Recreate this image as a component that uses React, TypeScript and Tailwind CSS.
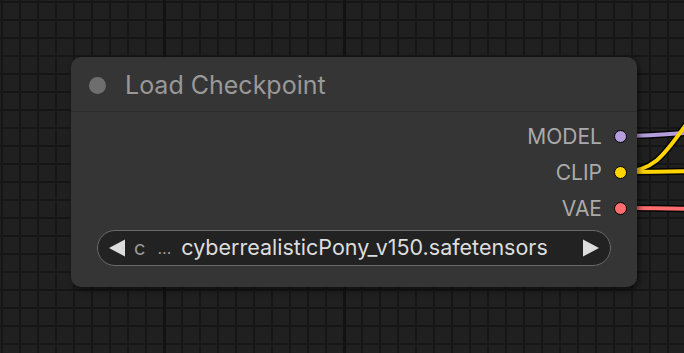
import React from 'react'

const outputs = [
  { name: 'MODEL', color: 'bg-[#b39ddb]' },
  { name: 'CLIP', color: 'bg-[#ffd500]' },
  { name: 'VAE', color: 'bg-[#ff6e6e]' },
]

const GridBackground = () => (
  <svg className="absolute inset-0" width="684" height="353">
    <defs>
      <pattern id="minor" x="1" y="1" width="18" height="18" patternUnits="userSpaceOnUse">
        <rect width="18" height="18" fill="#202020" />
        <rect width="2" height="18" fill="#161616" />
        <rect width="18" height="2" fill="#161616" />
      </pattern>
    </defs>
    <rect width="684" height="353" fill="url(#minor)" />
    <rect x="163" y="0" width="3" height="353" fill="#121212" />
    <rect x="343" y="0" width="3" height="353" fill="#121212" />
  </svg>
)

const Links = () => (
  <svg className="absolute inset-0" width="684" height="353" fill="none">
    {/* outlines */}
    <g stroke="#000" strokeWidth="7" strokeLinecap="round" opacity="0.85">
      <path d="M621 136 C 660 136, 680 133, 720 130" />
      <path d="M621 172 C 671 172, 671 130, 730 72" />
      <path d="M621 172 C 660 172, 680 171, 720 171" />
      <path d="M621 208 C 660 208, 680 209, 720 209" />
    </g>
    <g strokeWidth="4" strokeLinecap="round">
      <path d="M621 136 C 660 136, 680 133, 720 130" stroke="#b39ddb" />
      <path d="M621 172 C 671 172, 671 130, 730 72" stroke="#ffd500" />
      <path d="M621 172 C 660 172, 680 171, 720 171" stroke="#ffd500" />
      <path d="M621 208 C 660 208, 680 209, 720 209" stroke="#ff6e6e" />
    </g>
  </svg>
)

const Arrow = ({ dir }: { dir: 'left' | 'right' }) => (
  <svg width="18" height="18" viewBox="0 0 18 18" className="shrink-0">
    {dir === 'left' ? (
      <polygon points="17,0.5 17,17.5 1,9" fill="#dddddd" />
    ) : (
      <polygon points="1,0.5 1,17.5 17,9" fill="#dddddd" />
    )}
  </svg>
)

export default function App() {
  return (
    <div className="relative w-[684px] h-[353px] overflow-hidden bg-[#202020] font-['Inter',sans-serif]">
      <GridBackground />
      <Links />

      {/* Node */}
      <div className="absolute left-[71px] top-[57px] w-[566px] h-[230px] rounded-[10px] bg-[#353535] shadow-[2px_3px_6px_rgba(0,0,0,0.55)] flex flex-col">
        <div className="h-[55px] flex items-center border-b border-[#2b2b2b] pl-[18px] pt-[3px]">
          <div className="w-[17px] h-[17px] rounded-full bg-[#6e6e6e]" />
          <span className="ml-[19px] text-[25px] text-[#999999] leading-none">Load Checkpoint</span>
        </div>

        <div className="pt-[6px] flex flex-col">
          {outputs.map(o => (
            <div key={o.name} className="h-[36px] flex items-center justify-end pr-[10px] gap-[12px]">
              <span className="text-[21px] text-[#aaaaaa] leading-none">{o.name}</span>
              <div className={`w-[13px] h-[13px] rounded-full border-[1.5px] border-black ${o.color}`} />
            </div>
          ))}
        </div>

        <div className="mt-[4px] mx-[26px] h-[36px] rounded-full border border-[#6a6a6a] bg-[#222222] flex items-center pl-[10px] pr-[10px]">
          <Arrow dir="left" />
          <span className="ml-[8px] text-[20px] text-[#999999] leading-none">c</span>
          <span className="ml-[12px] text-[16px] text-[#999999] leading-none">…</span>
          <span className="ml-[10px] text-[21.5px] text-[#dddddd] leading-none">cyberrealisticPony_v150.safetensors</span>
          <div className="flex-1" />
          <Arrow dir="right" />
        </div>
      </div>
    </div>
  )
}
